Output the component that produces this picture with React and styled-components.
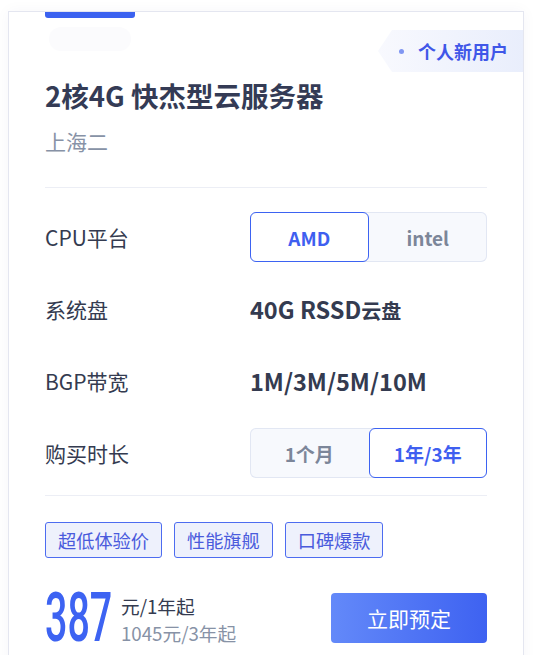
import styled, { createGlobalStyle } from "styled-components";

const GlobalStyle = createGlobalStyle`
  * {
    box-sizing: border-box;
  }
  body {
    margin: 0;
    background: #fff;
    font-family: "Noto Sans CJK SC", "Noto Sans", sans-serif;
  }
`;

// values are split so the latin part can be set a bit larger than the CJK part
const specs = [
  { label: "CPU平台", options: ["AMD", "intel"], active: 0 },
  { label: "系统盘", value: ["40G RSSD", "云盘"] },
  { label: "BGP带宽", value: ["1M/3M/5M/10M", ""] },
  { label: "购买时长", options: ["1个月", "1年/3年"], active: 1 },
];

const tags = ["超低体验价", "性能旗舰", "口碑爆款"];

const App = () => {
  return (
    <Page>
      <GlobalStyle />
      <Card>
        <TopBar />
        <GhostPill />
        <Badge>
          <Dot />
          个人新用户
        </Badge>
        <Title>2核4G 快杰型云服务器</Title>
        <Region>上海二</Region>
        <Divider $top={33} />
        <SpecList>
          {specs.map((spec) => (
            <SpecRow key={spec.label}>
              <Label>{spec.label}</Label>
              {spec.options ? (
                <Toggle>
                  {spec.options.map((opt, i) => (
                    <Option key={opt} $active={i === spec.active}>
                      {opt}
                    </Option>
                  ))}
                </Toggle>
              ) : (
                <Value>
                  <Latin>{spec.value[0]}</Latin>
                  {spec.value[1]}
                </Value>
              )}
            </SpecRow>
          ))}
        </SpecList>
        <Divider $top={17} />
        <Tags>
          {tags.map((t) => (
            <Tag key={t}>{t}</Tag>
          ))}
        </Tags>
        <Footer>
          <Price>
            <Amount>387</Amount>
            <PriceNotes>
              <span className="unit">元/1年起</span>
              <span className="alt">1045元/3年起</span>
            </PriceNotes>
          </Price>
          <BuyButton>立即预定</BuyButton>
        </Footer>
      </Card>
    </Page>
  );
};

const Page = styled.div`
  padding: 11px 11px 0 8px;
`;

const Card = styled.div`
  position: relative;
  width: 516px;
  min-height: 700px;
  border: 1px solid #e4e6f0;
  border-bottom: none;
  padding: 0 36px;
  background: #fff;
  box-shadow: 0 0 14px rgba(40, 50, 90, 0.04);
`;

const TopBar = styled.div`
  width: 90px;
  height: 6px;
  background: #3b62f0;
  border-radius: 0 0 3px 3px;
`;

const GhostPill = styled.div`
  width: 82px;
  height: 24px;
  margin: 9px 0 0 4px;
  border-radius: 12px;
  background: #fbfbfd;
`;

const Badge = styled.div`
  position: absolute;
  top: 18px;
  right: 0;
  width: 145px;
  height: 42px;
  display: flex;
  align-items: center;
  padding-left: 21px;
  gap: 14px;
  font-size: 18px;
  font-weight: 700;
  color: #3f57e8;
  background: linear-gradient(90deg, #f8f9fe 0%, #e9eefc 100%);
  clip-path: polygon(14px 0, 100% 0, 100% 100%, 14px 100%, 0 50%);
`;

const Dot = styled.span`
  width: 5px;
  height: 5px;
  border-radius: 50%;
  background: #8096f2;
`;

const Title = styled.h1`
  margin: 27px 0 0;
  font-size: 27.5px;
  line-height: 34px;
  font-weight: 700;
  color: #343b55;
`;

const Region = styled.div`
  margin-top: 16px;
  font-size: 21px;
  line-height: 26px;
  color: #8792a6;
`;

const Divider = styled.div`
  height: 1px;
  margin-top: ${(p) => p.$top}px;
  background: #eceef5;
`;

const SpecList = styled.div`
  display: flex;
  flex-direction: column;
  gap: 22px;
  margin-top: 24px;
`;

const SpecRow = styled.div`
  display: grid;
  grid-template-columns: 205px 1fr;
  align-items: center;
  height: 50px;
`;

const Label = styled.div`
  font-size: 21px;
  color: #343b50;
`;

const Value = styled.div`
  font-size: 20px;
  font-weight: 700;
  color: #343b50;
`;

const Latin = styled.span`
  font-size: 23.5px;
`;

const Toggle = styled.div`
  display: flex;
  height: 50px;
  border-radius: 6px;
  background: #f7f9fd;
  box-shadow: inset 0 0 0 1px #e2e7f3;
`;

const Option = styled.div`
  flex: 1;
  display: flex;
  align-items: center;
  justify-content: center;
  font-size: 19px;
  font-weight: 700;
  border-radius: 6px;
  color: ${(p) => (p.$active ? "#3f5ff0" : "#7c8699")};
  background: ${(p) => (p.$active ? "#fff" : "transparent")};
  border: 1px solid ${(p) => (p.$active ? "#3d63f2" : "transparent")};
`;

const Tags = styled.div`
  display: flex;
  gap: 12px;
  margin-top: 26px;
`;

const Tag = styled.span`
  height: 36px;
  padding: 0 12px;
  display: flex;
  align-items: center;
  font-size: 18.2px;
  color: #4a5bdc;
  background: #eef1fc;
  border: 1px solid #4d6cf0;
  border-radius: 3px;
`;

const Footer = styled.div`
  display: flex;
  justify-content: space-between;
  align-items: center;
  margin-top: 32px;
`;

const Price = styled.div`
  display: flex;
  align-items: flex-end;
`;

const Amount = styled.span`
  display: inline-block;
  font-family: Roboto, "Noto Sans", sans-serif;
  font-weight: 500;
  font-size: 68px;
  line-height: 56px;
  color: #3d63f2;
  transform: scaleX(0.58);
  transform-origin: left center;
  margin-right: -48px;
`;

const PriceNotes = styled.div`
  display: flex;
  flex-direction: column;
  margin-left: 8px;
  font-size: 18.7px;
  line-height: 27px;

  .unit {
    color: #343b50;
  }

  .alt {
    color: #8792a6;
  }
`;

const BuyButton = styled.button`
  width: 156px;
  height: 50px;
  border: none;
  border-radius: 4px;
  font-family: inherit;
  font-size: 21px;
  color: #fff;
  background: linear-gradient(90deg, #6389f9 0%, #3e62f1 100%);
  cursor: pointer;
`;

export default App;
